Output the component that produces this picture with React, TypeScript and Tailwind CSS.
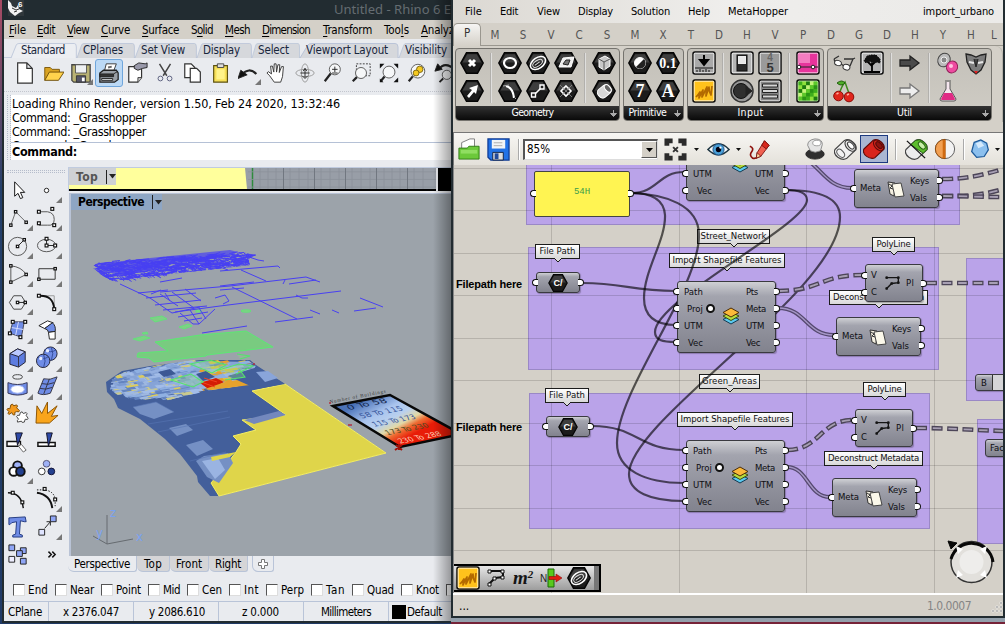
import React, { useLayoutEffect, useRef } from "react";

const UI = "font-['DejaVu_Sans_Condensed','DejaVu_Sans',sans-serif] font-stretch-condensed";

/* One line of text whose tracking is tuned so that it fills its box. */
function Fit({ t, className = "", u = -1 }: { t: string; className?: string; u?: number }) {
  const box = useRef<HTMLSpanElement>(null);
  const ink = useRef<HTMLSpanElement>(null);
  useLayoutEffect(() => {
    if (!box.current || !ink.current) return;
    ink.current.style.letterSpacing = "0px";
    const free = box.current.clientWidth - ink.current.getBoundingClientRect().width;
    ink.current.style.letterSpacing = `${free / t.length}px`;
  }, [t]);
  return (
    <span ref={box} className={`block shrink-0 whitespace-nowrap ${className}`}>
      <span ref={ink} className="inline-block">
        {u >= 0 ? (<>{t.slice(0, u)}<span className="underline underline-offset-2">{t[u]}</span>{t.slice(u + 1)}</>) : t}
      </span>
    </span>
  );
}

function Ic({ children, className = "size-6", vb = "0 0 24 24" }: { children: React.ReactNode; className?: string; vb?: string }) {
  return (
    <svg viewBox={vb} className={`block shrink-0 ${className}`} fill="none" stroke="#222" strokeWidth="1">
      {children}
    </svg>
  );
}

const serif = "Liberation Serif, serif";
const dot = (x: number, y: number, s = 3) => <rect x={x - s / 2} y={y - s / 2} width={s} height={s} fill="#fff" stroke="#111" strokeWidth="1.2" />;

/* ------------------------------- Rhino window ------------------------------- */

const rhinoMenu: [string, number, string][] = [
  ["File", 0, "w-[17px] ml-[5px]"], ["Edit", 0, "w-[18px] ml-[11px]"], ["View", 0, "w-[22px] ml-[12px]"],
  ["Curve", 0, "w-[29px] ml-[12px]"], ["Surface", 0, "w-[37px] ml-[12px]"], ["Solid", 1, "w-[22px] ml-[12px]"],
  ["Mesh", 0, "w-[25px] ml-[12px]"], ["Dimension", 0, "w-[48px] ml-[12px]"], ["Transform", 0, "w-[49px] ml-[13px]"],
  ["Tools", 3, "w-[25px] ml-[12px]"], ["Analyze", 0, "w-[39px] ml-[12px]"],
];

const rhinoTabs: [string, string, string][] = [
  ["Standard", "w-[66px] pl-[10px]", "w-[44px]"], ["CPlanes", "w-[58px] pl-[6px]", "w-[40px]"],
  ["Set View", "w-[62px] pl-[6px]", "w-[44px]"], ["Display", "w-[55px] pl-[6px]", "w-[37px]"],
  ["Select", "w-[48px] pl-[6px]", "w-[31px]"], ["Viewport Layout", "w-[99px] pl-[6px]", "w-[82px]"],
  ["Visibility", "w-[60px] pl-[6px]", "w-[42px]"],
];

const glass = (x: number, y: number, r: number) => (
  <>
    <circle cx={x} cy={y} r={r} fill="#f6f7f8" stroke="#555" />
    <path d={`M${x - r * 0.75} ${y + r * 0.75}L3 21`} stroke="#222" strokeWidth="2.4" />
  </>
);

const toolbarIcons: React.ReactNode[] = [
  <path d="M4 1h10l6 6v16H4zM14 1v6h6" fill="#fff" stroke="#333" strokeWidth="1.3" />,
  <><path d="M3 20V6h6l2 2h8v4" fill="#d9a322" stroke="#7a5508" /><path d="M3 20L8 11h16l-6 9z" fill="#ffd34d" stroke="#6b4a05" /></>,
  <><path d="M2 3h20v19H4l-2-2z" fill="#b9b273" stroke="#444" strokeWidth="1.4" /><path d="M6 3h12v9H6z" fill="#eef0f2" stroke="#555" /><path d="M7 15h10v7H7z" fill="#556" stroke="#333" /><path d="M13 17h3v4h-3z" fill="#fff" stroke="none" /></>,
  <><path d="M7 10L9 2h11l-3 8z" fill="#fff" stroke="#333" /><path d="M2 12l4-3h14l2 3v7l-4 3H2z" fill="#999fa6" stroke="#222" strokeWidth="1.4" /><path d="M2 13h15v3H2zM17 13l5-3" fill="#333" /><path d="M4 18h12v2H4z" fill="#dfe3e6" /><path d="M11 6l4-1" stroke="#666" strokeWidth="2" /></>,
  <><path d="M3 5h14v12l-4 5H3z" fill="#fff" stroke="#333" strokeWidth="1.300" /><path d="M17 17h-4v5" fill="#ccc" stroke="#333" /><path d="M9 4l5-3 7 1 2-1v5l-5 1-5 2-4-2z" fill="#99a" stroke="#222" /></>,
  <><path d="M6 2l8 13M18 2l-8 13" stroke="#444" strokeWidth="1.6" /><circle cx="7" cy="18" r="2.6" stroke="#555a7a" /><circle cx="17" cy="18" r="2.6" stroke="#555a7a" /></>,
  <><path d="M3 2h7l4 4v11H3z" fill="#fff" stroke="#333" strokeWidth="1.300" /><path d="M9 7h7l4 4v11H9z" fill="#fff" stroke="#333" strokeWidth="1.300" /></>,
  <><path d="M4 4h15v18H4z" fill="#f6df57" stroke="#5e5210" strokeWidth="1.3" /><path d="M8 2h7v4H8z" fill="#ddd" stroke="#444" /><path d="M7 8h9v11H7z" fill="#fff38a" stroke="none" /></>,
  <><path d="M4 14Q12 5 20 13" stroke="#222" strokeWidth="2.4" /><path d="M0 18l3-9 7 5z" fill="#111" /></>,
  <path d="M9 22L4 15l-3-3 1.500-1.500L6 13 5 4.500h2L8.500 11 9 2h2l.5 9L13 3h2l-.5 8.500L17 5h2l-1 11-2 6z" fill="#fff" stroke="#333" />,
  <><ellipse cx="12" cy="12" rx="10" ry="4" stroke="#999" /><ellipse cx="12" cy="12" rx="4" ry="10" stroke="#999" /><path d="M12 7v10M7 12h10M9 15l3 3 3-3M10 10l2-3 2 3" stroke="#222" /></>,
  <>{glass(14, 8, 6)}<path d="M11 8h6M14 5v6M11 12h6" stroke="#222" /></>,
  <><rect x="7" y="2" width="15" height="13" stroke="#333" strokeDasharray="2 1.500" />{glass(12, 12, 6)}</>,
  <>{glass(12, 11, 6.5)}<path d="M2 2h5L2 7zM22 2h-5l5 5zM22 22h-5l5-5zM2 22h4l-4-4z" fill="#111" stroke="none" /></>,
  <>{glass(13, 10, 7.5)}<circle cx="15" cy="8" r="3.5" fill="#f5c920" stroke="#7a6510" /><circle cx="11" cy="12" r="3.200" fill="#f5c920" stroke="#7a6510" /></>,
  <><path d="M5 8Q11 0 20 6" stroke="#222" strokeWidth="2.4" /><path d="M1 10l3-8 5 6z" fill="#111" /><circle cx="14" cy="14" r="5" fill="#f6f7f8" stroke="#555" /><path d="M10 18l-4 4" strokeWidth="2" /></>,
];

const blueFill = "#6f8ce6";
const paletteIcons: [React.ReactNode, boolean][] = [
  [<path d="M8 4v15l3.500-3 2.500 5.500 2.500-1-2.500-5.500h4.500z" fill="#fff" stroke="#111" />, false],
  [<circle cx="11" cy="13" r="2.3" fill="#fff" stroke="#222" />, true],
  [<><path d="M4 20L9 6l11 11" stroke="#666" />{dot(4, 20, 2.5)}{dot(9, 6, 2.5)}{dot(20, 17, 2.5)}</>, true],
  [<><path d="M3 6h9q7 1 7 8t-7 6H3" stroke="#555" />{dot(3, 6)}{dot(17, 3)}{dot(3, 18)}{dot(19, 20)}</>, true],
  [<><circle cx="11" cy="13" r="9.500" stroke="#555" /><path d="M11 13l7-7" />{dot(11, 13, 2.5)}{dot(18, 6, 2.5)}</>, true],
  [<><ellipse cx="11" cy="12" rx="9.500" ry="6.500" stroke="#555" /><path d="M11 6v6h9" />{dot(11, 5)}{dot(11, 12)}{dot(20, 12)}</>, true],
  [<><path d="M4 4v17l16-8q-5-8-16-9" stroke="#555" />{dot(4, 4, 2.5)}{dot(4, 21, 2.5)}{dot(20, 13, 2.5)}</>, true],
  [<><path d="M3 7h17v11H3z" stroke="#333" />{dot(20, 7, 2.5)}{dot(3, 18, 2.5)}</>, true],
  [<><path d="M7 6h8l4.500 7-4.500 7H7l-4.500-7z" stroke="#444" /><path d="M11 13h8" />{dot(11, 13, 2.5)}{dot(19, 13, 2.5)}</>, true],
  [<><path d="M5 6h14v14" stroke="#999" /><path d="M3 6q15-1 16 14" stroke="#111" strokeWidth="2" />{dot(3, 6)}{dot(19, 20)}</>, true],
  [<><path d="M6 4h12l-3 16L3 16z" fill={blueFill} stroke="#445" /><path d="M12 4L9 18M5 10l12 2" stroke="#d5ddff" />{dot(6, 4)}{dot(19, 4)}{dot(3, 16)}{dot(14, 20)}</>, true],
  [<><path d="M3 8l9-5 6 2-9 6z" fill="#fff" stroke="#222" /><path d="M9 11l8-6q4 3 3 9l-7 1q0-3-4-4z" fill={blueFill} stroke="#222" /><path d="M13 15l7-1v8l-6 0z" fill="#fff" stroke="#222" /></>, true],
  [<><path d="M3 8l8-5 8 3v11l-7 5-9-3z" fill="#5d7ce0" stroke="#223" /><path d="M3 8l9 3 7-5-8-3z" fill="#b9c8ff" stroke="#223" /><path d="M12 11v11" stroke="#334" /></>, true],
  [<><circle cx="15" cy="8" r="7" fill={blueFill} stroke="#223" /><circle cx="7.500" cy="15.500" r="7" fill={blueFill} stroke="#223" /><path d="M2 12q6 3 11-1M9 4q6 4 12 0M8 9q3 7 0 13M16 1q3 7 0 14" stroke="#334b99" /><circle cx="12" cy="5" r="1.800" fill="#e4ebff" stroke="none" /><circle cx="5" cy="13" r="1.800" fill="#e4ebff" stroke="none" /></>, true],
  [<><ellipse cx="11" cy="3" rx="5" ry="2.300" stroke="#444" /><path d="M1 9q10 4 20 0v11q-10 4-20 0z" fill="#6f8ce6" stroke="#335" /><ellipse cx="11" cy="16" rx="7" ry="4" fill="#fff" stroke="#aebff7" /></>, true],
  [<><path d="M8 5q6 2 14-2l-7 17q-8 3-13 0z" fill={blueFill} stroke="#334" /><path d="M14 5L8 21M6 10q6 2 13-1M4 15q6 2 13-1" stroke="#334" /></>, true],
  [<><path d="M4 3q2-2 3 1l3-1q2 1 0 3l3 3q0 2-3 1l-2 1q1 4-2 2l-1-2-3 2q-2-1 0-3L0 8q0-2 3-1z" fill="#f39a1e" stroke="#7a4b05" /><path d="M14 11q2-2 3 1l3-1q2 1 0 3l2 3q0 2-3 1l-1 3q-3 1-3-1l-4 1q-1-2 1-3l-2-3q1-2 3-1z" fill="#fff" stroke="#444" /></>, false],
  [<path d="M0 22L1 4l5 8L12 0l0 12L22 4l-6 11 7-1-9 8z" fill="#f9a51c" stroke="#8a5200" />, false],
  [<><path d="M0 12h14v5H0z" fill="#fff" stroke="#111" strokeWidth="1.500" /><path d="M9 3h7l-5 13z" fill="#2e4aa8" stroke="#112" /><path d="M12 17l3-2 5 6-3 2z" fill="#fff" stroke="#666" /></>, false],
  [<><path d="M2 13h18v4H2z" fill="#fff" stroke="#111" strokeWidth="1.500" /><path d="M11 3h6l-4 14z" fill="#2e4aa8" stroke="#112" /></>, false],
  [<><circle cx="11" cy="8" r="4.500" fill="#9fb2f7" stroke="#111" strokeWidth="2" /><circle cx="7" cy="14" r="4.500" fill="#fff" stroke="#111" strokeWidth="2" /><circle cx="14" cy="14" r="4.500" fill="#23408f" stroke="#111" strokeWidth="2" /></>, true],
  [<><circle cx="11" cy="6" r="3.500" fill="#9fb2f7" stroke="#557" /><circle cx="6" cy="14" r="3.500" fill="#fff" stroke="#333" /><circle cx="16" cy="14" r="3.500" fill="#23408f" stroke="#113" /></>, false],
  [<><path d="M1 6q14 0 16 16" stroke="#111" strokeWidth="1.500" />{dot(6, 6)}{dot(16, 16)}</>, false],
  [<><path d="M3 7q14 2 16 16" stroke="#111" strokeWidth="2" transform="translate(-2 -1)" /><path d="M1 3h7q11 1 12 10v7" strokeDasharray="1.500 1.500" stroke="#111" />{dot(9, 2)}{dot(20, 13)}</>, true],
  [<path d="M2 3l17-1 1 5h-2l-4-1-1 14 3 1v2H6v-2l3-1 1-13-5 1-2 2H2z" fill="#6f8ce6" stroke="#223a80" />, false],
  [<><path d="M9 14l6-7M11 7h4v4" /><path d="M3 15h6v6H3z" fill="#dfe4ff" /><path d="M15 1h6v6h-6z" fill="#8fa5f5" /></>, true],
  [<><path d="M2 2h6v6H2z" fill="#8fa5f5" /><path d="M14 5h6v6h-6z" fill="#8fa5f5" /><path d="M10 8h6v6h-6z" fill="#8fa5f5" /><path d="M2 14h6v6H2z" fill="#eef" /><path d="M14 16h6v6h-6z" fill="#8fa5f5" /></>, false],
  [<path d="M13 9l3 3-3 3M17 9l3 3-3 3" stroke="#111" strokeWidth="1.500" />, false],
];

function rng(seed: number) {
  let s = seed;
  return () => {
    s = (s * 1664525 + 1013904223) % 4294967296;
    return s / 4294967296;
  };
}

function streetPath() {
  const r = rng(7);
  let d = "";
  for (let i = 0; i < 900; i++) {
    const x = 90 + r() * 190;
    const f = (x - 90) / 190;
    const y = 264 - 14 * f + r() * (20 - 6 * f);
    const a = r() < 0.6 ? [4 + r() * 8, -(0.5 + r())] : [3 + r() * 3, 1.5 + r() * 2];
    d += `M${x.toFixed(1)} ${y.toFixed(1)}l${a[0].toFixed(1)} ${a[1].toFixed(1)}`;
  }
  return d;
}

function cityPatches() {
  const r = rng(21);
  const tones = ["#9db8e6", "#86a4d8", "#a3bde8", "#7c9bd2", "#dccc5e", "#93afe0", "#8fb0e2", "#c9c98e", "#6484c0", "#a0b9df"];
  const out: { d: string; c: string }[] = [];
  for (let i = 0; i < 520; i++) {
    const x = 108 + r() * 150;
    const y = 362 + r() * 38;
    const w = 3 + r() * 10;
    const h = 0.8 + r() * 2.4;
    let c = tones[Math.floor(r() * tones.length)];
    if (x > 195 && r() < 0.45) c = r() < 0.5 ? "#e2c63a" : "#e8a02c";
    out.push({ d: `M${x.toFixed(1)} ${y.toFixed(1)}l${w.toFixed(1)} ${(-w / 6).toFixed(1)}l${h.toFixed(1)} ${h.toFixed(1)}l${(-w).toFixed(1)} ${(w / 6).toFixed(1)}z`, c });
  }
  return out;
}

const legend = ["0 To 58", "58 To 115", "115 To 173", "173 To 230", "230 To 288"];

function CityScene() {
  return (
    <svg viewBox="71 195 380 362" className="absolute inset-0 h-full w-full" fill="none">
      <defs>
        <linearGradient id="legend" gradientUnits="userSpaceOnUse" x1="366" y1="400" x2="392" y2="447">
          <stop offset="0" stopColor="#4a72b8" /><stop offset=".35" stopColor="#a9c4ee" /><stop offset=".55" stopColor="#b9d0ee" /><stop offset=".72" stopColor="#e2d9a6" /><stop offset=".84" stopColor="#ee6c32" /><stop offset="1" stopColor="#e81c08" />
        </linearGradient>
        <clipPath id="streets"><path d="M92 268L100 262 140 257 180 252 236 249 246 254 256 256 248 260 250 266 225 269 170 275 155 284 120 286 103 277z" /></clipPath>
        <clipPath id="city"><path d="M110 391L112 379 125 373 160 366 200 360 240 357 256 366 252 375 260 384 212 391 180 398 150 406 118 396z" /></clipPath>
      </defs>
      <path d="M107 393L106 383 122 372 150 367 200 361 250 361 256 366 285 385 386 454 219 497 210 497 198 483 197 477 180 455 165 440 140 420 118 409 114 400z" fill="#435f9b" />
      <path d="M285 385L386 454 219 497 211 484 226 466 236 453 241 445 233 437 256 431 242 421 286 416 252 392z" fill="#dfd54a" stroke="#f5ee62" />
      <path d="M112 392L114 379 125 374 160 367 200 362 250 363 225 383 180 394 140 400z" fill="#87a4d6" />
      <g clipPath="url(#city)">{cityPatches().map((p, i) => <path key={i} d={p.d} fill={p.c} />)}</g>
      <path d="M200 384l16-5 8 4-14 8z" fill="#d41c05" /><path d="M205 390l20-7 24-4 9 6-48 6z" fill="#e6a22c" /><path d="M196 375l10-3 9 6-12 4zM158 373l12-3 6 5-12 3z" fill="#3c5894" />
      <path d="M204 379l13 4M201 383l14 5" stroke="#f04020" />
      <path d="M228 377l30-9 27 17-28 5z" fill="#435f9b" /><path d="M256 373l12-1 10 7-13 4z" fill="#89a5da" />
      <g fill="#7590c4">
        <path d="M169 429l17-4 7 6-16 6zM186 446l17-5 10 9-16 7zM133 408l23-5 18 10-20 7-14-5z" /><path d="M244 421l35-9 7 4-32 9z" fill="#7388bd" /><path d="M196 462l8-5 24-3 5 10-14 20-12-6z" /><path d="M202 462l16-3 7 12-10 9z" fill="#9ab4e2" />
      </g>
      <path d="M211 458l25-5-6 5-18 4z" fill="#dfd54a" />
      <path d="M133 408l23-5 18 10M148 425l80-13M158 433l72-15M190 462l36-9M130 400l60-12" stroke="#5876b4" strokeWidth=".6" />
      <path d="M155 343l45-7 46-4 27 16-66 8-1 1-52 6-5-4-12-1 1-4 30-2z" fill="#79cb80" stroke="#5ce873" />
      <g fill="#7fcf86" stroke="#5ce873" strokeWidth=".8"><path d="M150 319l12-2 5 3-12 3zM179 328l9-3 4 2-8 3zM133 340l11-3 6 2-10 3zM142 334l5-1 1 2-5 0z" /><ellipse cx="246" cy="312" rx="5" ry="1.300" /><path d="M196 311h5v2h-5z" /></g>
      <path d="M171 381l20-6 12 8-10 5zM190 365l20-4 16 5-14 8zM215 372l24-7 14 2-17 8M225 381l20-3-6-8M237 355l13 2-10 3" stroke="#54e46c" strokeWidth="1.1" fill="#8fd08a" fillOpacity=".35" />
      <g stroke="#4840f2">
        <path d="M96 268L104 264 150 259 230 251 238 253 220 259 170 265 150 272 120 276z" fill="#4840f2" fillOpacity=".7" stroke="none" />
        <path d={streetPath()} clipPath="url(#streets)" />
        <path d="M120 285L150 299 172 314 200 308M138 294l30-3M146 299l50-5M155 306l46-5M163 311l44-4M160 295l18 12M172 293l22 16M185 290l16 12M180 314l13 11 6 0 16-15M178 318l30-5M184 322l18-3M190 311l9 14M199 309l7 11M165 294l5 8M151 295l10-4" />
        <path d="M160 293L230 287M175 313L220 307M220 272L278 267 280 269M241 271L266 282M254 283L220 287M230 287L306 278 320 283M289 285L316 281M285 281l-2 4M232 288L297 320M220 307L341 292M275 323L313 318M360 299L383 308M354 312L376 309M202 334L247 327M215 299l10-3 4 6-6 3M296 296l6 3 6 0M310 311l10 4M332 311l7 3M220 291l24-2M246 257l12 4 6 1M190 268l22-3 16 6M160 283l22-4" />
      </g>
      <path d="M333 407L390 396 452 430 452 437 400 448z" fill="url(#legend)" stroke="#080808" strokeWidth="2.500" />
      <text x="330" y="404.500" fill="#333" fontSize="5" transform="rotate(-11 330 404.500)" fontFamily={serif} textLength="57">Number of Buildings</text>
      <g fontFamily="DejaVu Sans, sans-serif" fontSize="8.5">
        {legend.map((t, i) => (
          <text key={t} textLength={i ? 43 : 40} lengthAdjust="spacingAndGlyphs" fill={i === 4 ? "#ffc9b0" : i === 3 ? "#4d4b20" : i ? "#36549a" : "#14284f"} transform={`matrix(.98 -.19 .62 .72 ${349 + i * 12.8} ${411 + i * 8.4})`}>{t}</text>
        ))}
      </g>
      <path d="M396 446l6 5M402 446l-7 5M399 445v6" stroke="#a01008" strokeWidth="2" />
      <path d="M329 404h2M348 426h4M253 365h2" stroke="#b03040" strokeWidth="1.500" />
      <path d="M107 516v29l26-5M107 545l-14-8" stroke="#666b70" />
      <g fill="#7aa2f0" fontSize="13" fontFamily="DejaVu Sans, sans-serif"><text x="110" y="518">z</text><text x="136" y="542">x</text><text x="96" y="538">y</text></g>
    </svg>
  );
}

function ViewTitle({ t, className, tw }: { t: string; className: string; tw: string }) {
  return (
    <div className={`relative flex items-center text-[12px] font-bold ${className}`}>
      <Fit t={t} className={tw} />
      <span className="ml-[8px] h-[14px] w-px bg-[#222]" />
      <Ic className="ml-[2px] h-[5px] w-[7px]" vb="0 0 7 5"><path d="M0 0h7L3.500 4.500z" fill="#222" stroke="none" /></Ic>
    </div>
  );
}

const snaps: [string, string, string][] = [
  ["End", "ml-[9px]", "w-[20px]"], ["Near", "ml-[7px]", "w-[24px]"], ["Point", "ml-[7px]", "w-[25px]"],
  ["Mid", "ml-[7px]", "w-[17px]"], ["Cen", "ml-[7px]", "w-[20px]"], ["Int", "ml-[7px]", "w-[15px]"],
  ["Perp", "ml-[7px]", "w-[23px]"], ["Tan", "ml-[7px]", "w-[19px]"], ["Quad", "ml-[7px]", "w-[27px]"],
  ["Knot", "ml-[7px]", "w-[23px]"], ["", "ml-[7px]", "w-[10px]"],
];

const viewTabs: [string, string, string][] = [
  ["Perspective", "w-[69px] bg-[#e9ebef]", "w-[56px]"], ["Top", "w-[33px] bg-[#d5d5d7]", "w-[18px]"],
  ["Front", "w-[39px] bg-[#d5d5d7]", "w-[26px]"], ["Right", "w-[39px] bg-[#d5d5d7]", "w-[26px]"],
];

function RhinoWindow() {
  return (
    <div className="absolute top-0 left-[2px] flex h-[623px] w-[449px] flex-col overflow-hidden border-b-2 border-l-2 border-[#222c31] bg-[#e9ebef]">
      <header className="flex h-[20px] shrink-0 items-start justify-between bg-[#222c31]">
        <Ic className="ml-1 size-4" vb="0 0 16 16">
          <rect width="16" height="16" fill="#30373b" stroke="none" /><path d="M0 0l3 3 1 3 4 2 2-3 1 4 4 2-4 2-4 3-5-4-2-4z" fill="#f3f3f3" stroke="none" /><path d="M4 8l4 2 3-1M6 12l3-1" stroke="#333" />
          <text x="10" y="7" fontSize="8" fill="#fff" stroke="none" fontWeight="bold" fontFamily="Liberation Sans, sans-serif">6</text>
        </Ic>
        <Fit t="Untitled - Rhino 6 E" className="w-[117px] font-['Noto_Sans',sans-serif] text-[13px] leading-[18px] text-[#656c71]" />
      </header>
      <nav className="flex h-[19px] shrink-0 items-center bg-[#d4d0c8] text-[11.5px] leading-[22px]">
        {rhinoMenu.map(([t, u, c]) => <Fit key={t} t={t} u={u} className={c} />)}
      </nav>
      <div className="mt-[4px] flex h-[15px] shrink-0 items-center border-b border-[#c3cbdc] pl-[7px] text-[11.500px] text-[#18263c]">
        {rhinoTabs.map(([t, c, w], i) => (
          <div key={t} className={`relative flex h-[15px] shrink-0 items-center ${c}`}>
            <svg viewBox="0 0 100 15" preserveAspectRatio="none" className="absolute inset-0 h-full w-full">
              <path d="M0 15L8 2Q9 .5 12 .5H96Q99 .5 99 4V15" fill={i ? "#d6d8dc" : "#eceef2"} stroke="#b9c4d8" />
            </svg>
            <Fit t={t} className={`relative leading-[17px] ${w}`} />
          </div>
        ))}
      </div>
      <div className="mt-px flex h-[29px] shrink-0 pl-[7px]">
        {toolbarIcons.map((n, i) => (
          <div key={i} className={`relative flex h-[28px] w-[28px] shrink-0 items-center justify-center rounded-[3px] ${i === 3 ? "border border-[#6fa6dc] bg-[#bcd9f5]" : ""}`}>
            <Ic className="size-[22px]">{n}</Ic>
            {(i === 2 || i === 8) && <Ic className="absolute right-[2px] bottom-[2px] size-[6px]" vb="0 0 6 6"><path d="M6 0v6H0z" fill="#777" stroke="none" /></Ic>}
          </div>
        ))}
      </div>
      <div className="mt-[3px] mb-[3px] h-px shrink-0 border-t border-dotted border-[#c3c6ce]" />
      <div className="flex h-[65px] shrink-0">
        <div className="ml-[3px] w-[4px] border-x border-dotted border-[#b5bccb]" />
        <div className="flex flex-1 flex-col bg-white text-[12.5px]">
          <div className="flex h-[48px] flex-col overflow-hidden border-b border-[#b5c1d6] pt-[2px] pl-px leading-[14px]">
            <Fit t="Loading Rhino Render, version 1.50, Feb 24 2020, 13:32:46" className="w-[328px]" />
            <Fit t="Command: _Grasshopper" className="w-[134px]" />
            <Fit t="Command: _Grasshopper" className="w-[134px]" />
            <Fit t="Command: _Grasshopper" className="w-[134px]" />
          </div>
          <Fit t="Command:" className="mt-px ml-px w-[65px] leading-[15px] font-bold" />
        </div>
      </div>
      <div className="flex h-[412px] shrink-0 pt-[7px]">
        <aside className="w-[64px] shrink-0">
          <div className="mx-[3px] mt-[3px] h-[3px] border-y border-dotted border-[#b5bccb]" />
          <div className="mt-[2px] grid grid-cols-[29px_29px] auto-rows-[28.1px]">
            {paletteIcons.map(([n, more], i) => (
              <div key={i} className="relative flex items-center pl-[3px]">
                <Ic className="size-[23px] overflow-visible">{n}</Ic>
                {more && <Ic className="absolute right-0 bottom-0 size-[6px]" vb="0 0 6 6"><path d="M6 0v6H0z" fill="#777" stroke="none" /></Ic>}
              </div>
            ))}
          </div>
        </aside>
        <div className="flex w-[383px] shrink-0 flex-col">
          <div className="flex h-[24px] shrink-0 border-t border-l border-[#c0cbdf]">
            <div className="relative w-[367px] overflow-hidden border-b-2 border-black bg-[#989ea7]">
              <svg viewBox="69 169 367 22" preserveAspectRatio="none" className="absolute inset-0 h-full w-full">
                <path d="M69 169H245l2 22H69z" fill="#ffff9c" />
                <path d="M252.500 169v22" stroke="#2e8a3c" strokeWidth="1.500" />
                <path d="M260 169v22M268 169v22M276 169v22M290 169v22M299 169v22M308 169v22M321 169v22M330 169v22M339 169v22M352 169v22M361 169v22M370 169v22M384 169v22M392 169v22M400 169v22M414 169v22M423 169v22M248 173H436M248 181H436M248 189H436" stroke="#8b919a" strokeWidth=".8" />
                <path d="M283.500 169v22M314.500 169v22M345.500 169v22M376.500 169v22M407.500 169v22" stroke="#70767f" />
              </svg>
              <ViewTitle t="Top" tw="w-[22px]" className="h-[17px] w-[47px] bg-[#cfd1d4] pl-[7px] text-[#555]" />
            </div>
            <div className="ml-[2px] h-full flex-1 bg-black" />
          </div>
          <div className="relative mt-[2px] ml-px h-[363px] shrink-0 overflow-hidden border-t border-l-2 border-[#b9c3d6] bg-[#9ca3aa]">
            <CityScene />
            <ViewTitle t="Perspective" tw="w-[66px]" className="h-[16px] w-[91px] bg-[#8ea6c4] pl-[7px] text-black" />
          </div>
          <div className="flex h-[16px] text-[11.5px]">
            {viewTabs.map(([t, c, w]) => (
              <div key={t} className={`flex h-[16px] shrink-0 justify-center rounded-br-[3px] rounded-bl-[6px] border-r border-b border-[#b9c4d8] leading-[17px] ${c}`}>
                <Fit t={t} className={w} />
              </div>
            ))}
            <div className="ml-[4px] flex w-[22px] items-center justify-center rounded-br-[3px] rounded-bl-[6px] border-r border-b border-l border-[#b9c4d8]">
              <Ic className="size-[10px]" vb="0 0 10 10"><path d="M3.500 .5h3v3h3v3h-3v3h-3v-3h-3v-3h3z" fill="#fff" stroke="#777" /></Ic>
            </div>
          </div>
        </div>
      </div>
      <div className="mt-[9px] flex h-[18px] shrink-0 items-center text-[11.500px]">
        {snaps.map(([t, c, w], i) => (
          <div key={i} className={`flex shrink-0 items-center gap-[3px] ${c}`}>
            <span className="block size-[12px] border border-r-[#ddd] border-b-[#ddd] border-t-[#555] border-l-[#555] bg-white" />
            <Fit t={t || " "} className={`leading-[18px] ${w}`} />
          </div>
        ))}
      </div>
      <footer className="mt-[2px] flex h-[21px] shrink-0 items-stretch divide-x divide-[#b9c4d8] border-t border-[#b9c4d8] text-[11.500px] leading-[21px]">
        <div className="w-[45px] pl-[4px]"><Fit t="CPlane" className="w-[34px]" /></div>
        <div className="w-[85px] pl-[14px]"><Fit t="x 2376.047" className="w-[56px]" /></div>
        <div className="w-[85px] pl-[15px]"><Fit t="y 2086.610" className="w-[56px]" /></div>
        <div className="w-[85px] pl-[23px]"><Fit t="z 0.000" className="w-[37px]" /></div>
        <div className="w-[85px] pl-[17px]"><Fit t="Millimeters" className="w-[50px]" /></div>
        <div className="flex pl-[3px]"><span className="mt-[3px] mr-px block size-[14px] bg-black" /><Fit t="Default" className="w-[35px]" /></div>
      </footer>
      <div className="pointer-events-none absolute top-0 right-0 h-full w-[18px] bg-linear-to-r from-transparent to-black/35" />
    </div>
  );
}

/* ---------------------------- Grasshopper window ---------------------------- */

const ghMenu: [string, string][] = [
  ["File", "ml-[12px] w-[17px]"], ["Edit", "ml-[18px] w-[18px]"], ["View", "ml-[19px] w-[23px]"], ["Display", "ml-[18px] w-[35px]"],
  ["Solution", "ml-[18px] w-[39px]"], ["Help", "ml-[18px] w-[22px]"], ["MetaHopper", "ml-[18px] w-[60px]"],
];

function Hex({ children, className = "h-[22px] w-[24px]" }: { children: React.ReactNode; className?: string }) {
  return (
    <Ic className={className} vb="0 0 24 22">
      <path d="M.8 11L6.500 .8h11L23.200 11 17.500 21.200h-11z" fill="#1b1b1b" stroke="#050505" strokeWidth="1.500" />
      <path d="M2.500 10.500L7.300 2.200h9.400l4.800 8.300z" fill="#4b4b4b" stroke="none" opacity=".75" />
      {children}
    </Ic>
  );
}

function Tile({ children, fill = "#a9a9a9" }: { children: React.ReactNode; fill?: string }) {
  return (
    <Ic className="size-[24px]">
      <rect x="1" y="1" width="22" height="22" rx="2" fill={fill} stroke="#0c0c0c" strokeWidth="1.500" />
      <rect x="2.200" y="2.200" width="19.600" height="19.600" rx="1" stroke="#fff" opacity=".75" />
      {children}
    </Ic>
  );
}

const W = { stroke: "#fff", strokeWidth: 1.6 };
const Scribble = <Tile fill="#ffc21c"><path d="M4 18q3-3 4-5-1 3-1 6 2-5 4-8-1 4-1 7 3-6 5-10-1 6-1 9 2-6 3-9 0 5 2 8l1-9" stroke="#b36a00" strokeWidth="1.700" strokeLinejoin="round" /></Tile>;
const SpiralHex = <Hex><g transform="rotate(-35 12 11)"><ellipse cx="12" cy="11" rx="8.500" ry="5.300" {...W} /><ellipse cx="11.500" cy="11" rx="5.500" ry="2.800" stroke="#ddd" /><path d="M8 11h6" stroke="#ddd" /></g></Hex>;

const geometry: React.ReactNode[][][] = [
  [[<Hex><path d="M9 8l6 6M15 8l-6 6" stroke="#fff" strokeWidth="3" /></Hex>, <Hex><path d="M7 16l5-6-3-2 9-3-2 9-2-2-5 6z" fill="#fff" stroke="none" /></Hex>]],
  [
    [<Hex><ellipse cx="12" cy="11" rx="6" ry="5" stroke="#fff" strokeWidth="2.200" /></Hex>, <Hex><path d="M8 6q7 2 8 12" stroke="#fff" strokeWidth="2.200" /><path d="M5 6l6-1M16 17l2 2" stroke="#aaa" /></Hex>],
    [SpiralHex, <Hex><path d="M8 15l8-8" {...W} /><path d="M5.500 13h4v4h-4zM14 5h4v4h-4z" fill="#222" stroke="#fff" strokeWidth="1.400" /></Hex>],
    [<Hex><path d="M5 15L9 6l11-1-3 10z" fill="#eee" stroke="#fff" /><path d="M9 12l3-4h4l-2 5z" fill="#777" stroke="#222" /></Hex>, <Hex><path d="M12 6l5 5-5 5-5-5z" {...W} /><path d="M6 5l12 12M18 5L6 17" stroke="#999" strokeWidth=".7" /></Hex>],
  ],
  [[<Hex><path d="M7 7l6-3 5 3v7l-6 4-5-3z" fill="#c8c8c8" stroke="#fff" /><path d="M12 10v8M7 7l5 3 6-3" stroke="#555" /></Hex>, <Hex><g transform="rotate(-40 12 11)"><rect x="5" y="6.500" width="14" height="10" rx="4" fill="#d8d8d8" stroke="#fff" /><ellipse cx="16.500" cy="11.500" rx="2.500" ry="4.400" fill="#666" stroke="#fff" /></g></Hex>]],
];

const hexText = (t: string, s: number) => <Hex><text x="12" y={11 + s * 0.33} textAnchor="middle" fontFamily={serif} fontWeight="bold" fontSize={s} fill="#fff" stroke="none">{t}</text></Hex>;
const primitive: React.ReactNode[][][] = [[
  [<Hex><circle cx="12" cy="11" r="5.500" fill="#fff" stroke="#fff" /><path d="M8 15A5.500 5.500 0 0 0 16 7z" fill="#222" stroke="none" /></Hex>, hexText("7", 18)],
  [hexText("0.1", 14), hexText("A", 18)],
]];

const greens = ["#3fae1c", "#8ee03a", "#1e7a0e", "#c4f27a", "#5cc82a", "#2b9415"];
const input: React.ReactNode[][][] = [
  [[<Tile><path d="M12 4v9M8 9l4 5 4-5z" stroke="#000" strokeWidth="2" fill="#000" /><path d="M3 17h18M5 19v2M8 18v3M11 19v2M14 18v3M17 19v2" stroke="#111" /></Tile>, Scribble]],
  [
    [<Tile fill="#b5b5b5"><rect x="7" y="4" width="10" height="16" fill="#2a2a2a" stroke="#111" /><rect x="8.500" y="5.500" width="7" height="7" fill="#e8e8e8" stroke="#eee" /></Tile>, <Ic className="size-[24px]"><circle cx="12" cy="12" r="11" fill="#999" stroke="#333" strokeWidth="1.500" /><circle cx="11" cy="12" r="7.500" fill="#2f2f2f" stroke="#111" /><path d="M16 7l6 5-6 5z" fill="#222" /></Ic>],
    [<Tile fill="#9a9a9a"><text x="12" y="10" fontSize="10" textAnchor="middle" fontWeight="bold" fill="#666" stroke="none" fontFamily="Liberation Sans, sans-serif">4</text><text x="12" y="21" fontSize="13" textAnchor="middle" fontWeight="bold" fill="#333" stroke="none" fontFamily="Liberation Sans, sans-serif">5</text></Tile>, <Tile fill="#888"><path d="M4.500 5h15v3h-15zM4.500 10.500h15v3h-15zM4.500 16h15v3h-15z" fill="#d5d5d5" stroke="#222" /></Tile>],
  ],
  [[
    <Tile fill="#e8349c"><path d="M2 3h12v9H2z" fill="#f47cc0" stroke="none" /><path d="M2 16h20" stroke="#222" /><circle cx="3" cy="16" r="1.800" fill="#fff" /><circle cx="17" cy="16" r="1.800" fill="#fff" /></Tile>,
    <Tile fill="#55b82a">{Array.from({ length: 25 }, (_, i) => <rect key={i} x={2.500 + (i % 5) * 3.800} y={2.500 + Math.floor(i / 5) * 3.800} width="3.800" height="3.800" fill={greens[(i * 7 + Math.floor(i / 5) * 2) % 6]} stroke="none" />)}</Tile>,
  ]],
];

const util: React.ReactNode[][][] = [
  [
    [<Ic><path d="M2 8l5-3M3 11l-1-3M9 13l3 2M18 15l3-7 2-1M12 8l9 0" stroke="#333" strokeWidth="1.300" /><ellipse cx="6" cy="12" rx="3.500" ry="2.500" fill="#fff" stroke="#333" transform="rotate(20 6 12)" /><ellipse cx="14.500" cy="16" rx="3.500" ry="2.800" fill="#fff" stroke="#333" transform="rotate(20 14 16)" /></Ic>, <Ic><path d="M7 16Q9 8 13 3q2 6 5 14" stroke="#3e8a1e" strokeWidth="1.500" /><path d="M5 4q5-4 8 0-4 4-8 0z" fill="#4fae2a" stroke="#256010" /><circle cx="6.500" cy="17" r="4.800" fill="#e0261c" stroke="#8a0d08" /><circle cx="17" cy="18" r="4.800" fill="#e0261c" stroke="#8a0d08" /><path d="M4.500 15l2-1M15 16l2-1" stroke="#ffb0a0" strokeWidth="1.500" /></Ic>],
    [<Tile fill="#b5b5b5"><path d="M12 21V12M12 15l-5-5M12 14l5-5M12 11V5" stroke="#000" strokeWidth="1.800" /><path d="M4 10l3-5 4-1 5 0 4 4 0 4-4-1-3 1-4-2-3 2z" fill="#111" stroke="#111" strokeDasharray="1.500 1" /><path d="M4 21h16" stroke="#000" strokeWidth="2" /></Tile>, null],
  ],
  [[<Ic><path d="M2 9h10V5l9 7-9 7v-4H2z" fill="#4a4a4a" stroke="#222" strokeWidth="1.300" /></Ic>, <Ic><path d="M2 9h10V5l9 7-9 7v-4H2z" fill="#eee" stroke="#777" strokeWidth="1.300" /></Ic>]],
  [
    [<Ic><ellipse cx="8" cy="9" rx="6" ry="7" fill="#bbb" stroke="#444" transform="rotate(30 8 9)" /><ellipse cx="8" cy="9" rx="3" ry="3" fill="#888" stroke="#eee" /><ellipse cx="16" cy="16" rx="5.500" ry="6" fill="#ee4aa0" stroke="#922058" transform="rotate(30 16 16)" /><circle cx="15" cy="15" r="2" fill="#ffc2e0" stroke="none" /></Ic>, <Ic><path d="M9 2h6M10 3v7L4 20q0 2 2 2h12q2 0 2-2L14 10V3" fill="#f5e6ee" stroke="#555" /><path d="M8 14h8l3 6q0 1-1 1H6q-1 0-1-1z" fill="#e02a84" stroke="none" /></Ic>],
    [<Ic><path d="M2 3l5 1 5 2 5-2 5-1-1 8-4 8-5 4-5-4-4-8z" fill="#7d7d7d" stroke="#222" strokeWidth="1.300" /><path d="M5 11l5 1M19 11l-5 1" stroke="#e8e8e8" strokeWidth="2" /><path d="M10 8l2 8 2-8" fill="#444" /><path d="M10 20h4l-2 3z" fill="#e02020" stroke="none" /></Ic>, null],
  ],
];

function Ribbon({ name, groups, className, tw }: { name: string; groups: React.ReactNode[][][]; className: string; tw: string }) {
  return (
    <section className={`flex h-[73px] shrink-0 flex-col overflow-hidden rounded-[4px] border border-[#75736e] bg-linear-to-b from-[#c3c0b9] to-[#d0cdc5] ${className}`}>
      <div className="flex h-[58px] items-start justify-center">
        {groups.map((g, i) => (
          <React.Fragment key={i}>
            {i > 0 && <div className="flex w-[10px] shrink-0 justify-center pt-[4px]"><span className="h-[50px] w-[2px] border-r border-white/60 bg-[#999]/50" /></div>}
            {g.map((col, j) => (
              <div key={j} className="flex w-[28px] shrink-0 flex-col">
                {col.map((n, k) => <div key={k} className="flex h-[28px] items-center justify-center">{n}</div>)}
              </div>
            ))}
          </React.Fragment>
        ))}
      </div>
      <div className="relative flex h-[14px] items-center justify-center bg-linear-to-b from-[#333] to-[#0a0a0a] text-[10.500px] leading-[10px] text-white">
        <Fit t={name} className={`-mt-[3px] ${tw}`} />
        <Ic className="absolute right-[2px] bottom-[3px] size-[7px]" vb="0 0 7 7"><path d="M3.500 0v6M.5 3.500l3 3 3-3z" fill="#aaa" stroke="#aaa" /></Ic>
      </div>
    </section>
  );
}

const Caret = ({ className }: { className: string }) => <Ic className={`h-[3px] w-[5px] ${className}`} vb="0 0 5 3"><path d="M0 0h5L2.500 3z" fill="#111" stroke="none" /></Ic>;
const Rule = ({ className }: { className: string }) => <span className={`block h-[21px] w-[2px] border-r border-white bg-[#aaa] ${className}`} />;

function Tube({ body, hole, line }: { body: string; hole: string; line: string }) {
  return (
    <g stroke={line} strokeWidth="1.200" strokeLinejoin="round">
      <path d="M1 12L11 2.500Q15 .5 19.500 4T23 12L13 21.500Q9 23.500 4 20T1 12z" fill={body} />
      <ellipse cx="17" cy="8" rx="4.300" ry="6.800" transform="rotate(-42 17 8)" fill={body} />
      <ellipse cx="17.500" cy="7.800" rx="2.400" ry="4.400" transform="rotate(-42 17.500 7.800)" fill={hole} />
    </g>
  );
}

function GhToolbar() {
  return (
    <div className="mt-[10px] flex h-[33px] shrink-0 items-center border-t border-l border-[#777] bg-linear-to-b from-[#f7f6f3] to-[#e4e1da]">
      <Ic className="ml-[4px] size-[22px]"><path d="M4 20V5l9-4h5v15" fill="#fff" stroke="#777" /><path d="M1 23V11h9l2-2h11v14z" fill="#6cc93a" stroke="#2d7a14" /><path d="M3 15h18" stroke="#a9ec7c" strokeWidth="4" opacity=".6" /></Ic>
      <Ic className="ml-[7px] size-[23px]"><path d="M1 1h22v22H4l-3-3z" fill="#2272e6" stroke="#0c3a94" strokeWidth="1.300" /><path d="M5 2h14v9H5z" fill="#f2f4f6" stroke="none" /><path d="M7 5h9M7 8h9" stroke="#aaa" /><path d="M6 15h11v8H6z" fill="#ddd" stroke="#124" /><path d="M8 16h4v6H8z" fill="#224a9a" stroke="none" /></Ic>
      <Rule className="ml-[8px]" />
      <div className="ml-[3px] flex h-[21px] w-[135px] items-center border-t-2 border-r border-b border-l-2 border-t-[#555] border-r-[#ddd] border-b-[#ddd] border-l-[#555] bg-white pl-[2px] text-[11.500px]">
        <Fit t="85%" className="w-[23px]" />
        <span className="ml-auto flex h-[17px] w-[16px] items-center justify-center border border-t-white border-r-[#555] border-b-[#555] border-l-white bg-[#d4d0c8]"><Ic className="h-[4px] w-[7px]" vb="0 0 7 4"><path d="M0 0h7L3.500 4z" fill="#000" stroke="none" /></Ic></span>
      </div>
      <Ic className="ml-[6px] size-[23px]"><path d="M3 8V3h6M15 3h6v5M21 16v5h-6M9 21H3v-5" stroke="#2b2b2b" strokeWidth="5" /><path d="M9.500 9.500l5 5M14.500 9.500l-5 5" stroke="#333" strokeWidth="2" /></Ic>
      <Caret className="ml-[7px]" />
      <Ic className="ml-[8px] size-[23px]"><path d="M1 12Q12 0 23 12 12 23 1 12z" fill="#f6fafc" stroke="#1d3440" strokeWidth="1.600" /><circle cx="12" cy="12" r="5.800" fill="#4aa0d8" stroke="#1b4f86" /><circle cx="12" cy="12" r="2.800" fill="#001" stroke="none" /><circle cx="14" cy="10" r="1.200" fill="#fff" stroke="none" /></Ic>
      <Caret className="ml-[6px]" />
      <Ic className="ml-[7px] size-[22px]"><path d="M2 9q5 2 2 6t1 7q4 1 6-2" stroke="#8d0f0a" strokeWidth="1.800" /><path d="M10 16L18 3l5 5-9 12-5 2z" fill="#f06050" stroke="#7d1510" /><path d="M18 3l5 5-3 4-5-4z" fill="#d8281c" stroke="#7d1510" /><path d="M10 16l4 4-5 2z" fill="#ffd9a0" stroke="#7d1510" /></Ic>
      <Ic className="ml-[34px] size-[22px]"><ellipse cx="12" cy="17.500" rx="10" ry="5.500" fill="#2f2f2f" /><path d="M4 8q0-6 8-7 8 0 8 6l-2 7q-6 3-11 0z" fill="#e4e4e4" stroke="#888" /><ellipse cx="14" cy="5.500" rx="4.500" ry="3" fill="#fff" stroke="#999" /></Ic>
      <Ic className="ml-[8px] size-[23px]"><Tube body="#f2f2f2" hole="#fff" line="#444" /><ellipse cx="7" cy="16" rx="3" ry="5" stroke="#555" transform="rotate(-42 7 16)" /></Ic>
      <span className="ml-[3px] flex size-[28px] items-center justify-center border border-[#1d3a80] bg-[#a9b6d2]"><Ic className="size-[22px]"><Tube body="#d8231c" hole="#8e1410" line="#5d0b08" /></Ic></span>
      <Rule className="ml-[7px]" />
      <Ic className="ml-[8px] size-[23px]"><Tube body="#ececec" hole="#d3f0b5" line="#444" /><path d="M6 7l5-4.500Q15 .5 19.500 4T23 12l-4 4z" fill="#5cbc2c" stroke="#256010" /><ellipse cx="17.500" cy="7.800" rx="2.500" ry="4.500" fill="#c8efa8" stroke="#256010" transform="rotate(-42 17.500 7.800)" /><path d="M2 3l19 18" stroke="#111" strokeWidth="1.400" /></Ic>
      <Ic className="ml-[6px] size-[22px]"><circle cx="12" cy="12" r="10.500" fill="#f3f3f3" stroke="#555" /><path d="M12 1.500a10.500 10.500 0 0 0 0 21z" fill="#f2a052" stroke="#8d4605" /><path d="M11 2v20" stroke="#d06a10" strokeWidth="3" /></Ic>
      <Rule className="ml-[7px]" />
      <Ic className="ml-[5px] size-[20px]"><path d="M5 4l8-3 7 4 2 8-5 8-9 1-6-7z" fill="#8cc0ee" stroke="#1d5a9a" strokeWidth="1.500" /><path d="M7 5l6-2 4 5-7 3z" fill="#d5eafc" stroke="none" /></Ic>
      <Caret className="ml-[5px]" />
    </div>
  );
}

const grip = "absolute h-[7px] w-[6px] border-[1.5px] border-[#111] bg-white";

function Port({ side, className }: { side: "l" | "r"; className: string }) {
  return <span className={`${grip} ${side === "l" ? "-left-[5px] rounded-l-full border-r-0" : "-right-[5px] rounded-r-full border-l-0"} ${className}`} />;
}

const shell = "absolute rounded-[3px] border border-[#3a3a40] bg-linear-to-b from-[#cfd0d4] via-[#a3a4ae] via-20% to-[#82838e] text-[9.500px] text-[#0e0e12] shadow-[1px_1px_1px_rgba(0,0,0,.25)]";

function ImportNode({ className }: { className: string }) {
  return (
    <div className={`flex h-[72px] w-[99px] pt-px ${shell} ${className}`}>
      <div className="flex w-[25px] flex-col items-end leading-[17px]">
        <Fit t="Path" className="w-[19px]" /><Fit t="Proj" className="w-[16px]" /><Fit t="UTM" className="w-[19px]" /><Fit t="Vec" className="w-[15px]" />
      </div>
      <span className="mt-[21px] ml-[3px] block size-[9px] rounded-full border-2 border-[#111] bg-white" />
      <Ic className="mt-[24px] ml-[7px] h-[18px] w-[18px]" vb="0 0 18 18">
        <path d="M1 12.500l8-4 8 4-8 4.500z" fill="#5ac8ee" stroke="#153a52" /><path d="M1 9l8-4 8 4-8 4.500z" fill="#b6dc3c" stroke="#3b4a10" /><path d="M1 5.500l8-4.500 8 4.500-8 4.500z" fill="#fbb93a" stroke="#4a2c08" />
      </Ic>
      <div className="ml-[6px] flex flex-col leading-[17px]">
        <Fit t="Pts" className="w-[12px]" /><Fit t="Meta" className="w-[20px]" /><Fit t="UTM" className="w-[18px]" /><Fit t="Vec" className="w-[14px]" />
      </div>
      <Port side="l" className="top-[6px]" /><Port side="l" className="top-[23px]" /><Port side="l" className="top-[40px]" /><Port side="l" className="top-[57px]" />
      <Port side="r" className="top-[6px]" /><Port side="r" className="top-[23px]" /><Port side="r" className="top-[40px]" /><Port side="r" className="top-[57px]" />
    </div>
  );
}

function MetaNode({ className }: { className: string }) {
  return (
    <div className={`flex h-[39px] w-[85px] items-center ${shell} ${className}`}>
      <Fit t="Meta" className="ml-[5px] w-[21px]" />
      <Ic className="ml-[6px] size-[18px]" vb="0 0 18 18"><path d="M1 2l7 1-1 13-4-2z" fill="#f4efe0" stroke="#333" /><path d="M5 4l9-1 3 13-9 1z" fill="#fbf8ea" stroke="#444" /><path d="M2 4l3 2-2 2 3 1" stroke="#333" /></Ic>
      <div className="ml-[5px] flex flex-col leading-[17px]"><Fit t="Keys" className="w-[19px]" /><Fit t="Vals" className="w-[17px]" /></div>
      <Port side="l" className="top-[15px]" /><Port side="r" className="top-[7px]" /><Port side="r" className="top-[24px]" />
    </div>
  );
}

const PolyGlyph = <><path d="M2 2h14v6l-8 1-6 6" stroke="#151515" strokeWidth="1.600" /><path d="M1 1h2v2H1zM15 1h2v2h-2zM15 7h2v2h-2zM7 8h2v2H7zM1 14h2v2H1z" fill="#151515" stroke="#151515" /></>;

function PolyNode({ className }: { className: string }) {
  return (
    <div className={`flex h-[38px] w-[58px] items-center ${shell} ${className}`}>
      <div className="ml-[5px] flex flex-col leading-[17px]"><Fit t="V" className="w-[6px]" /><Fit t="C" className="w-[6px]" /></div>
      <Ic className="ml-[8px] size-[15px]" vb="0 0 18 18">{PolyGlyph}</Ic>
      <Fit t="Pl" className="ml-[6px] w-[8px]" />
      <Port side="l" className="top-[7px]" /><Port side="l" className="top-[24px]" /><Port side="r" className="top-[15px]" />
    </div>
  );
}

function PathNode({ className }: { className: string }) {
  return (
    <div className={`flex h-[21px] w-[44px] items-center justify-center ${shell} ${className}`}>
      <Hex className="h-[18px] w-[20px]"><text x="12" y="15" textAnchor="middle" fontSize="11" fontWeight="bold" fill="#fff" stroke="none" fontFamily="Liberation Sans, sans-serif">C/</text></Hex>
      <Port side="l" className="top-[6px]" /><Port side="r" className="top-[6px]" />
    </div>
  );
}

function Balloon({ t, className, tw }: { t: string; className: string; tw: string }) {
  return (
    <div className={`absolute flex h-[15px] flex-col items-center border border-[#1c1c1c] bg-linear-to-b from-white to-[#d9d9d9] text-[9.500px] leading-[12px] text-[#111] ${className}`}>
      <Fit t={t} className={tw} />
      <Ic className="absolute top-[12px] h-[6px] w-[10px]" vb="0 0 10 6"><path d="M0 0h10L5 5z" fill="#dcdcdc" stroke="none" /><path d="M1 1l4 4 4-4" stroke="#1c1c1c" /></Ic>
    </div>
  );
}

const solid = ["M631 193C658 193 658 172 684 172", "M631 193C650 193 664 199 665 215C666 240 644 270 644 298C644 318 657 325 676 325", "M631 193C665 194 699 205 699 235C699 290 617 390 617 443C617 470 645 483 684 483", "M786 190C800 190 807 193 807 200C807 225 655 300 655 332C655 340 662 342 676 342", "M786 190C825 190 840 200 840 217C840 290 629 420 629 474C629 492 650 501 684 501", "M582 283C625 283 630 291 676 291", "M592 426C638 426 638 450 684 450"];
const twin = ["M786 154C820 154 820 188 852 188", "M778 308C806 308 806 335 834 335", "M787 467C808 467 808 497 830 497"];
const dashed = ["M778 291C820 291 820 275 862 275", "M926 283H1003", "M942 179C965 179 980 176 1003 169", "M942 196C965 196 980 196 1003 189", "M942 196C965 196 980 197 1003 197", "M787 450C820 450 820 420 853 420", "M916 428C950 428 970 430 1003 431"];

function Canvas() {
  return (
    <main className="relative h-[428px] shrink-0 overflow-hidden border-l border-[#888] bg-[#d4d0c8]">
      <div className="absolute -top-[165px] -left-[454px] h-[624px] w-[1005px]">
        <div className="absolute top-[150px] left-[526px] h-[75px] w-[434px] border border-[#9a88c6] bg-[#baa3e9]" />
        <div className="absolute top-[247px] left-[528px] h-[123px] w-[411px] border border-[#9a88c6] bg-[#baa3e9]" />
        <div className="absolute top-[393px] left-[529px] h-[136px] w-[401px] border border-[#9a88c6] bg-[#baa3e9]" />
        <div className="absolute top-[258px] left-[966px] h-[143px] w-[60px] border border-[#9a88c6] bg-[#baa3e9]" />
        <div className="absolute top-[419px] left-[977px] h-[125px] w-[60px] border border-[#9a88c6] bg-[#baa3e9]" />
        <svg viewBox="0 0 1005 624" className="absolute inset-0 h-full w-full" fill="none">
          <path d="M551.500 165V593M679.500 165V593M806.500 165V593M934.500 165V593M453 168.500H1003M453 210.500H1003M453 253.500H1003M453 295.500H1003M453 338.500H1003M453 380.500H1003M453 423.500H1003M453 465.500H1003M453 508.500H1003M453 550.500H1003" stroke="#000" strokeOpacity=".14" />
        </svg>
        <Fit t="Filepath here" className="absolute top-[277px] left-[456px] w-[66px] font-['Liberation_Sans',sans-serif] text-[11px] leading-[14px] font-bold text-black" />
        <Fit t="Filepath here" className="absolute top-[420px] left-[456px] w-[66px] font-['Liberation_Sans',sans-serif] text-[11px] leading-[14px] font-bold text-black" />
        <Balloon t="File Path" tw="w-[36px]" className="top-[244px] left-[535px] w-[45px]" />
        <Balloon t="Street_Network" tw="w-[66px]" className="top-[229px] left-[697px] w-[73px]" />
        <Balloon t="Import Shapefile Features" tw="w-[109px]" className="top-[253px] left-[669px] w-[116px]" />
        <Balloon t="PolyLine" tw="w-[34px]" className="top-[237px] left-[872px] w-[43px]" />
        <Balloon t="Deconstruct Metadata" tw="w-[91px]" className="top-[290px] left-[829px] w-[99px]" />
        <Balloon t="File Path" tw="w-[36px]" className="top-[388px] left-[545px] w-[44px]" />
        <Balloon t="Green_Areas" tw="w-[55px]" className="top-[374px] left-[699px] w-[61px]" />
        <Balloon t="Import Shapefile Features" tw="w-[109px]" className="top-[412px] left-[677px] w-[116px]" />
        <Balloon t="PolyLine" tw="w-[34px]" className="top-[382px] left-[863px] w-[43px]" />
        <Balloon t="Deconstruct Metadata" tw="w-[91px]" className="top-[451px] left-[824px] w-[99px]" />
        <svg viewBox="0 0 1005 624" className="absolute inset-0 h-full w-full" fill="none">
          <g stroke="#000" strokeOpacity=".62" strokeWidth="2.200">{solid.map((d) => <path key={d} d={d} />)}</g>
          {twin.map((d) => <g key={d}><path d={d} stroke="#55496f" strokeWidth="4" /><path d={d} stroke="#a596c6" strokeWidth="1.400" /></g>)}
          {dashed.map((d) => <g key={d}><path d={d} stroke="#4c4558" strokeWidth="4.600" strokeDasharray="11 4.500" /><path d={d} stroke="#a79fb3" strokeWidth="1.800" strokeDasharray="8.500 7" strokeDashoffset="-1.200" /></g>)}
        </svg>
        <div className="absolute top-[171px] left-[534px] flex h-[46px] w-[96px] items-center justify-center rounded-[2px] border border-[#444] bg-[#fff452] font-['Liberation_Mono',monospace] text-[9px] text-[#3a9a4a]">
          <Fit t="54H" className="-mt-[3px] w-[16px]" />
          <Port side="l" className="top-[18px]" /><Port side="r" className="top-[18px]" />
        </div>
        <ImportNode className="top-[129px] left-[686px]" />
        <ImportNode className="top-[281px] left-[677px]" />
        <ImportNode className="top-[440px] left-[686px]" />
        <MetaNode className="top-[169px] left-[854px]" />
        <MetaNode className="top-[317px] left-[836px]" />
        <MetaNode className="top-[478px] left-[832px]" />
        <PolyNode className="top-[264px] left-[865px]" />
        <PolyNode className="top-[409px] left-[855px]" />
        <PathNode className="top-[272px] left-[536px]" />
        <PathNode className="top-[416px] left-[546px]" />
        <div className={`top-[374px] left-[975px] flex h-[17px] w-[60px] ${shell}`}>
          <span className="w-[17px] border-r border-[#333] text-center leading-[16px]">B</span><span className="flex-1 bg-[#d5d5d8]" />
        </div>
        <div className={`top-[439px] left-[985px] h-[18px] w-[60px] pl-[4px] leading-[16px] ${shell}`}>Fac</div>
        <svg viewBox="0 0 60 60" className="absolute top-[534px] left-[942px] size-[60px]" fill="none">
          <circle cx="29.500" cy="28" r="20.500" fill="#e2e0dc" stroke="#333" strokeWidth="1.500" />
          <circle cx="29.500" cy="28" r="12" fill="#eeedeb" />
          <path d="M9 25a21.500 21.500 0 0 1 42 3" stroke="#080808" strokeWidth="3" />
          <path d="M6 7l9 2-6 6z" fill="#080808" stroke="#080808" />
          <path d="M14 12l7 3-5 5zM45 12l-7 3 5 5zM14 44l7-3-5-5zM45 44l-7-3 5-5z" fill="#fff" />
        </svg>
        <div className="absolute top-[564px] left-[452px] flex h-[28px] w-[149px] items-center border-2 border-l-0 border-black bg-linear-to-b from-[#e6e6e6] to-[#9d9d9d] pl-[4px]">
          {Scribble}
          <Ic className="ml-[7px] size-[18px]" vb="0 0 18 18"><path d="M2 2h14v6l-8 1-6 6" stroke="#111" strokeWidth="2" /><path d="M1 1h3v3H1zM14 1h3v3h-3zM14 7h3v3h-3zM6 8h3v3H6zM1 14h3v3H1z" fill="#fff" stroke="#111" /></Ic>
          <span className="ml-[8px] w-[22px] font-['Liberation_Serif',serif] text-[19px] leading-[20px] font-bold whitespace-nowrap text-[#151515] italic">m<sup className="-top-[6px] text-[11px]">2</sup></span>
          <Ic className="ml-[5px] h-[20px] w-[22px] overflow-visible" vb="0 0 22 20"><path d="M8 1h6v18H8z" fill="#58c81c" stroke="#1d6a08" /><path d="M9 8.500h7V6l6 4-6 4v-2.500H9z" fill="#e01c14" stroke="#8c0d08" strokeWidth=".6" /><text x="0" y="14" fontSize="10" fill="#222" stroke="none" fontFamily="Liberation Sans, sans-serif">N</text></Ic>
          <span className="ml-[5px]">{SpiralHex}</span>
          <span className="ml-auto h-full w-[5px] bg-[#777]" />
        </div>
      </div>
    </main>
  );
}

function GrasshopperWindow() {
  return (
    <div className="absolute top-0 left-[451px] flex h-[618px] w-[554px] flex-col overflow-hidden border-r-2 border-b-2 border-l-2 border-[#222c31] bg-[#d4d0c8]">
      <nav className="flex h-[23px] shrink-0 items-center bg-linear-to-r from-[#dbd8d2] via-[#efeeec] to-[#ebeae8] text-[11px] leading-[22px]">
        {ghMenu.map(([t, c]) => <Fit key={t} t={t} className={c} />)}
        <Fit t="import_urbano" className="mr-[9px] ml-auto w-[71px]" />
      </nav>
      <div className="flex h-[23px] shrink-0 text-[11.500px] text-[#555]">
        <div className="h-[23px] w-[28px] shrink-0 rounded-t-[5px] border border-b-0 border-[#9a978f] bg-linear-to-b from-[#f6f5f3] to-[#d4d0c8] text-center leading-[19px] text-[#333]">P</div>
        {"MSVCSMXTDHVPDGDHYH".split("").map((c, i) => <div key={i} className="h-[23px] w-[28px] shrink-0 border-b border-[#9a978f] text-center leading-[24px]">{c}</div>)}
        <div className="h-[23px] w-[18px] shrink-0 border-b border-[#9a978f] text-center leading-[24px]">L</div>
      </div>
      <div className="flex h-[76px] shrink-0 items-start rounded-tr-[8px] border-r border-[#b5b2aa] pt-[2px] pl-[2px]">
        <Ribbon name="Geometry" groups={geometry} className="w-[165px]" tw="w-[42px] -ml-[10px]" />
        <Ribbon name="Primitive" groups={primitive} className="ml-[3px] w-[61px]" tw="w-[38px] -ml-[12px]" />
        <Ribbon name="Input" groups={input} className="ml-[3px] w-[137px]" tw="w-[26px] -ml-[10px]" />
        <Ribbon name="Util" groups={util} className="ml-[3px] w-[165px]" tw="w-[15px] -ml-[10px]" />
      </div>
      <GhToolbar />
      <Canvas />
      <footer className="flex flex-1 items-center border-t-2 border-white pl-[6px] text-[12px] leading-[20px]">
        <span>...</span>
        <Fit t="1.0.0007" className="ml-auto w-[44px] text-[#858585]" />
        <Ic className="mt-[3px] ml-[20px] size-[12px]" vb="0 0 12 12"><path d="M9 1h2v2H9zM9 5h2v2H9zM5 5h2v2H5zM9 9h2v2H9zM5 9h2v2H5zM1 9h2v2H1z" fill="#888" stroke="#fff" strokeWidth=".5" /></Ic>
      </footer>
    </div>
  );
}

export default function App() {
  return (
    <div className={`relative h-[624px] w-[1005px] overflow-hidden bg-linear-to-b from-[#a84a63] via-[#24406b] via-30% to-[#203a66] text-black ${UI}`}>
      <div className="absolute bottom-0 left-[451px] h-[6px] w-[554px] border-b-2 border-[#762338] bg-[#93a0ac]" />
      <RhinoWindow />
      <GrasshopperWindow />
    </div>
  );
}
